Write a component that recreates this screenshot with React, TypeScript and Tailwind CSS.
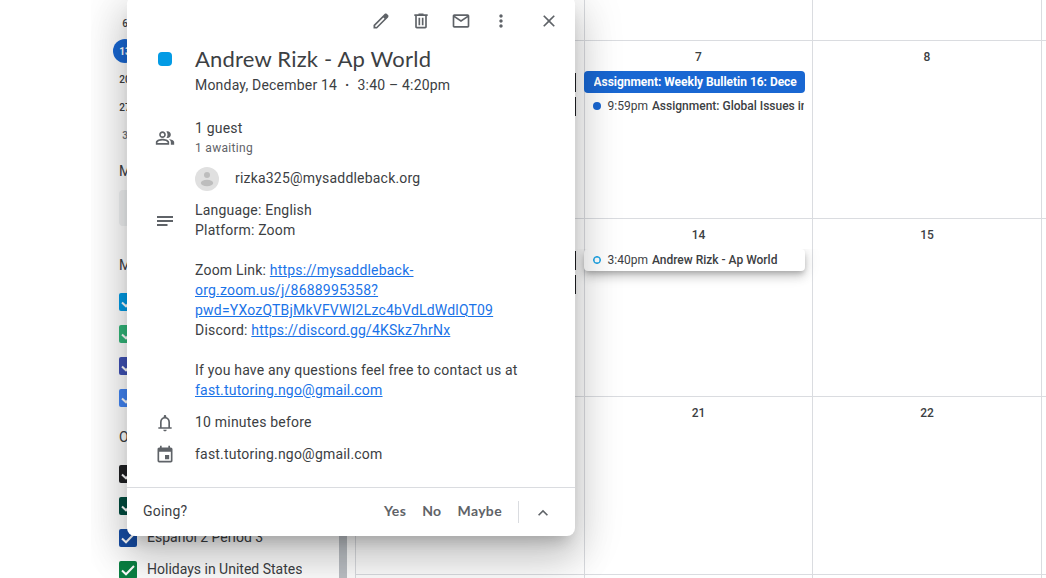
import type { ReactNode } from 'react';

function Icon({ d, size = 20 }: { d: string; size?: number }) {
  return (
    <svg width={size} height={size} viewBox="0 0 24 24" fill="currentColor" className="block shrink-0">
      <path d={d} />
    </svg>
  );
}

const icons = {
  edit: 'M20.41 4.94l-1.35-1.35c-.78-.78-2.05-.78-2.83 0L3 16.82V21h4.18L20.41 7.77c.79-.78.79-2.05 0-2.83zm-14 14.12L5 19v-1.36l9.82-9.82 1.41 1.41-9.82 9.83z',
  trash: 'M15 4V3H9v1H4v2h1v13c0 1.1.9 2 2 2h10c1.1 0 2-.9 2-2V6h1V4h-5zm2 15H7V6h10v13zM9 8h2v9H9zm4 0h2v9h-2z',
  mail: 'M20 4H4c-1.1 0-2 .9-2 2v12c0 1.1.9 2 2 2h16c1.1 0 2-.9 2-2V6c0-1.1-.9-2-2-2zm-.8 2L12 10.8 4.8 6h14.4zM4 18V7.87l8 5.33 8-5.33V18H4z',
  more: 'M12 8c1.1 0 2-.9 2-2s-.9-2-2-2-2 .9-2 2 .9 2 2 2zm0 2c-1.1 0-2 .9-2 2s.9 2 2 2 2-.9 2-2-.9-2-2-2zm0 6c-1.1 0-2 .9-2 2s.9 2 2 2 2-.9 2-2-.9-2-2-2z',
  close: 'M19 6.41L17.59 5 12 10.59 6.41 5 5 6.41 10.59 12 5 17.59 6.41 19 12 13.41 17.59 19 19 17.59 13.41 12z',
  people: 'M15 8c0-1.42-.5-2.73-1.33-3.76.42-.14.86-.24 1.33-.24 2.21 0 4 1.79 4 4s-1.79 4-4 4c-.43 0-.84-.09-1.23-.21-.03-.01-.06-.02-.1-.03A5.98 5.98 0 0 0 15 8zm1.66 5.13C18.03 14.06 19 15.32 19 17v3h4v-3c0-2.18-3.58-3.47-6.34-3.87zM9 6c-1.1 0-2 .9-2 2s.9 2 2 2 2-.9 2-2-.9-2-2-2m0 9c-2.7 0-5.8 1.29-6 2.01V18h12v-1c-.2-.71-3.3-2-6-2M9 4c2.21 0 4 1.79 4 4s-1.79 4-4 4-4-1.79-4-4 1.79-4 4-4zm0 9c2.67 0 8 1.34 8 4v3H1v-3c0-2.66 5.33-4 8-4z',
  notes: 'M2.4 6h19.2v2.4H2.4zM2.4 10.8h19.2v2.4H2.4zM2.4 15.6H15v2.4H2.4z',
  bell: 'M18 17v-6c0-3.07-1.63-5.64-4.5-6.32V4c0-.83-.67-1.5-1.5-1.5s-1.5.67-1.5 1.5v.68C7.63 5.36 6 7.92 6 11v6H4v2h16v-2h-2zm-2 0H8v-6c0-2.48 1.51-4.5 4-4.5s4 2.02 4 4.5v6zm-4 5c1.1 0 2-.9 2-2h-4c0 1.1.9 2 2 2z',
  event: 'M17 12h-5v5h5v-5zM16 1v2H8V1H6v2H5c-1.11 0-1.99.9-1.99 2L3 19a2 2 0 0 0 2 2h14c1.1 0 2-.9 2-2V5c0-1.1-.9-2-2-2h-1V1h-2zm3 18H5V8h14v11z',
  up: 'M12 8l-6 6 1.41 1.41L12 10.83l4.59 4.58L18 14z',
};

function CalendarItem({ color, label }: { color: string; label?: string }) {
  return (
    <div className="flex h-8 items-center gap-2.5 pl-7">
      <span className={`flex size-[18px] shrink-0 items-center justify-center rounded-[2px] text-white ${color}`}>
        <svg width="18" height="18" viewBox="0 0 18 18" fill="none" stroke="currentColor" strokeWidth="2">
          <path d="M3 9.5 7 13.3 15 5" />
        </svg>
      </span>
      {label && <span className="truncate pb-0.5 text-sm text-[#3c4043]">{label}</span>}
    </div>
  );
}

function Sidebar() {
  const dates = ['6', '13', '20', '27', '3'];
  return (
    <aside className="flex h-[578px] w-[264px] shrink-0 overflow-hidden bg-white">
      <div className="w-[248px] shrink-0">
        <div className="pt-[9px] pl-[22px] text-[10px] font-medium">
          {dates.map((d, i) => (
            <div key={d} className="flex h-7 items-center">
              <span
                className={`flex size-6 items-center justify-center rounded-full ${
                  i === 1 ? 'bg-[#1967d2] font-bold text-white' : i === 4 ? 'text-[#70757a]' : 'text-[#3c4043]'
                }`}
              >
                {d}
              </span>
            </div>
          ))}
        </div>
        <h3 className="flex h-[41px] items-end pl-7 pb-3 text-sm leading-none text-[#3c4043]">Meet with...</h3>
        <div className="ml-7 h-9 w-52 rounded bg-[#f1f3f4]" />
        <h3 className="flex h-[60px] items-end pl-7 pb-[14px] text-sm leading-none text-[#3c4043]">My calendars</h3>
        <CalendarItem color="bg-[#039be5]" />
        <CalendarItem color="bg-[#33b679]" />
        <CalendarItem color="bg-[#3f51b5]" />
        <CalendarItem color="bg-[#4285f4]" />
        <h3 className="flex h-11 items-end pl-7 pb-[14px] text-sm leading-none text-[#3c4043]">Other calendars</h3>
        <CalendarItem color="bg-[#202124]" />
        <CalendarItem color="bg-[#004d40]" />
        <CalendarItem color="bg-[#174ea6]" label="Español 2 Period 3" />
        <CalendarItem color="bg-[#0b8043]" label="Holidays in United States" />
      </div>
      <div className="w-2 shrink-0 bg-[#bdc1c6]" />
    </aside>
  );
}

function Day({ n, children }: { n?: string; children?: ReactNode }) {
  return (
    <div className="min-w-0 border-b border-l border-[#dadce0]">
      <div className="flex h-[30px] items-center justify-center pt-0.5 text-xs font-medium text-[#3c4043]">{n}</div>
      <div className="mr-[7px] -ml-px flex flex-col gap-0.5">{children}</div>
    </div>
  );
}

function DarkEvents() {
  return (
    <div className="mr-px flex flex-col gap-[5px] pt-0.5">
      <div className="h-[19px] bg-[#202124]" />
      <div className="h-[19px] bg-[#202124]" />
    </div>
  );
}

function MonthGrid() {
  return (
    <main className="grid h-[578px] min-w-0 flex-1 grid-cols-[229px_228px_229px_5px] grid-rows-[41px_178px_178px_178px_3px] overflow-hidden bg-white">
      <Day /><Day /><Day /><Day />
      <Day><DarkEvents /></Day>
      <Day n="7">
        <div className="h-[22px] rounded bg-[#1967d2] pr-[7px] pl-[9.5px] text-xs leading-[22px] font-bold tracking-[-0.03px] text-white">
          <div className="overflow-hidden whitespace-nowrap">Assignment: Weekly Bulletin 16: Dece</div>
        </div>
        <div className="mr-px flex h-[22px] items-center overflow-hidden pl-[9px] text-xs whitespace-nowrap text-[#3c4043]">
          <span className="mr-[6.5px] size-2 shrink-0 rounded-full bg-[#1967d2]" />
          <span className="mr-1">9:59pm</span>
          <span className="font-medium">Assignment: Global Issues in</span>
        </div>
      </Day>
      <Day n="8" />
      <Day />
      <Day><DarkEvents /></Day>
      <Day n="14">
        <div className="flex h-[22px] items-center rounded bg-white pl-[9px] text-xs whitespace-nowrap text-[#3c4043] shadow-[0_6px_10px_0_rgba(0,0,0,0.14),0_1px_18px_0_rgba(0,0,0,0.12),0_3px_5px_-1px_rgba(0,0,0,0.2)] [clip-path:inset(0_-30px_-30px_-30px)]">
          <span className="mr-[6.5px] size-2 shrink-0 rounded-full border border-[#039be5] shadow-[inset_0_0_0_0.5px_#039be5]" />
          <span className="mr-1">3:40pm</span>
          <span className="font-medium">Andrew Rizk - Ap World</span>
        </div>
      </Day>
      <Day n="15" />
      <Day />
      <Day /><Day n="21" /><Day n="22" /><Day />
      <div className="border-l border-[#dadce0]" />
      <div className="border-l border-[#dadce0]" />
      <div className="border-l border-[#dadce0]" />
      <div className="border-l border-[#dadce0]" />
    </main>
  );
}

function Row({ icon, iconTop, className, children }: { icon?: ReactNode; iconTop: string; className: string; children: ReactNode }) {
  return (
    <div className={`flex ${className}`}>
      <div className={`flex w-[68px] shrink-0 justify-start pl-7 text-[#5f6368] ${iconTop}`}>{icon}</div>
      <div className="min-w-0 flex-1">{children}</div>
    </div>
  );
}

const link = 'text-[#1a73e8] underline';

function EventPopup() {
  return (
    <section className="absolute -top-1 left-9 flex h-[540px] w-[448px] flex-col rounded-lg bg-white pt-1 text-sm leading-5 tracking-[0.2px] text-[#3c4043] shadow-[0_24px_38px_3px_rgba(0,0,0,0.14),0_9px_46px_8px_rgba(0,0,0,0.12),0_11px_15px_-7px_rgba(0,0,0,0.2)]">
      <div className="flex h-10 shrink-0 items-center justify-end gap-5 pt-px pr-4 text-[#5f6368]">
        <Icon d={icons.edit} />
        <Icon d={icons.trash} />
        <Icon d={icons.mail} />
        <Icon d={icons.more} />
        <span className="ml-2"><Icon d={icons.close} /></span>
      </div>
      <Row className="h-[78px]" iconTop="pt-3" icon={<span className="ml-[3px] size-[14px] rounded bg-[#039be5]" />}>
        <h1 className="pt-[5px] font-['Lato',sans-serif] text-[22px] leading-7 tracking-[0.2px]">Andrew Rizk - Ap World</h1>
        <p className="pt-0.5 whitespace-pre">Monday, December 14  <span className="mx-[0.6px] font-bold">·</span>  3:40 – 4:20pm</p>
      </Row>
      <Row className="h-12" iconTop="pt-[10px]" icon={<Icon d={icons.people} />}>
        <p>1 guest</p>
        <p className="text-xs leading-5 tracking-[0.3px] text-[#5f6368]">1 awaiting</p>
      </Row>
      <div className="flex h-[34px] gap-4 pl-[68px]">
        <svg width="24" height="24" viewBox="0 0 24 24" className="mt-px">
          <circle cx="12" cy="12" r="12" fill="#e0e0e0" />
          <circle cx="12" cy="8" r="3" fill="#bdbdbd" />
          <ellipse cx="12" cy="16" rx="6.2" ry="3.3" fill="#bdbdbd" />
        </svg>
        <span className="pt-0.5">rizka325@mysaddleback.org</span>
      </div>
      <Row className="h-[212px]" iconTop="pt-[11px]" icon={<Icon d={icons.notes} />}>
        <p>Language: English</p>
        <p>Platform: Zoom</p>
        <p className="mt-5">
          Zoom Link:{' '}
          <a className={link}>https://mysaddleback-<br />org.zoom.us/j/8688995358?<br />pwd=YXozQTBjMkVFVWI2Lzc4bVdLdWdlQT09</a>
        </p>
        <p>Discord: <a className={link}>https://discord.gg/4KSkz7hrNx</a></p>
        <p className="mt-5">If you have any questions feel free to contact us at</p>
        <p><a className={link}>fast.tutoring.ngo@gmail.com</a></p>
      </Row>
      <Row className="h-8" iconTop="pt-px" icon={<Icon d={icons.bell} />}>10 minutes before</Row>
      <Row className="h-[43px]" iconTop="pt-px" icon={<Icon d={icons.event} />}>fast.tutoring.ngo@gmail.com</Row>
      <footer className="flex h-[49px] items-center border-t border-[#dadce0] pr-[22px] pl-4">
        <span className="flex-1 pb-0.5">Going?</span>
        <div className="flex gap-4 pb-0.5 font-['Lato',sans-serif] font-bold tracking-[0.35px] text-[#5f6368]">
          <span>Yes</span>
          <span>No</span>
          <span>Maybe</span>
        </div>
        <span className="mr-[14px] ml-4 h-[22px] w-px bg-[#dadce0]" />
        <span className="pt-0.5 text-[#5f6368]"><Icon d={icons.up} /></span>
      </footer>
    </section>
  );
}

export default function App() {
  return (
    <div className="h-[578px] w-[1046px] overflow-hidden bg-white pl-[91px] font-['Roboto',sans-serif]">
      <div className="relative flex h-full overflow-hidden">
        <Sidebar />
        <MonthGrid />
        <EventPopup />
      </div>
    </div>
  );
}
